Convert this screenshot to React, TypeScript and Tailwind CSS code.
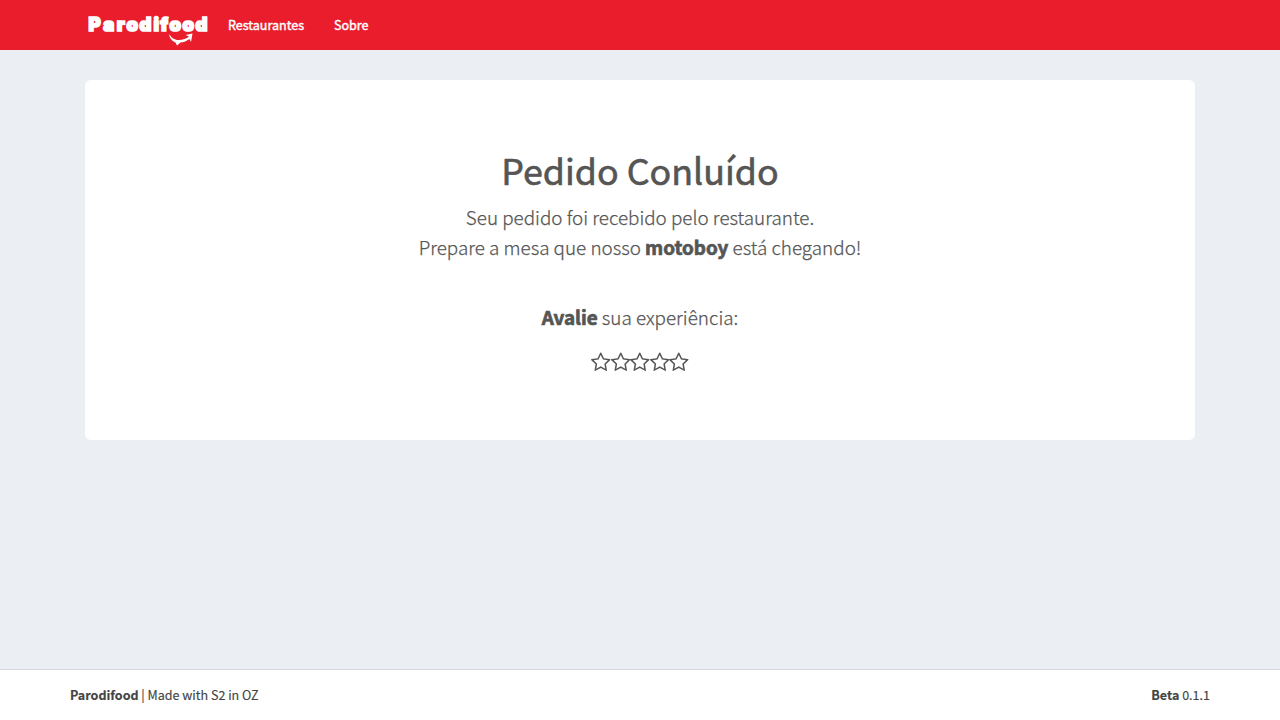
const STARS = [1, 2, 3, 4, 5];

function Logo() {
  return (
    <svg width="126" height="36" viewBox="-2 -2 126 36" className="block shrink-0 overflow-visible text-white" fill="currentColor" role="img" aria-label="Parodifood">
      <text
        x="1.4 16.2 29.8 39.4 52.6 66.4 73.2 82.4 95.4 108.4"
        y="18"
        stroke="currentColor"
        strokeWidth="1.7"
        className="font-['Inter',sans-serif] text-[18.5px] font-black"
      >
        Parodifood
      </text>
      <path d="M82 21C84 24.5 87 26.500 90 27C95 27.500 99 26 102 23.500L98.500 22L105.500 20.500L104 29L102.500 26C99 28.500 96 29.500 93.500 29.500L90 32.500L88.500 29.500C85.500 28.500 82.500 25 82 21Z" />
    </svg>
  );
}

function Star() {
  return (
    <svg width="19.5" height="21" viewBox="64 0 1664 1792" fill="currentColor" className="block shrink-0">
      <path d="M1201 1004l306-297-422-62-189-382-189 382-422 62 306 297-73 421 378-199 377 199zm527-357q0 22-26 48l-363 354 86 500q1 7 1 20 0 50-41 50-19 0-40-12l-449-236-449 236q-22 12-40 12-21 0-31.5-14.5t-10.5-35.5q0-6 2-20l86-500-364-354q-25-27-25-48 0-37 56-46l502-73 225-455q19-41 49-41t49 41l225 455 502 73q56 9 56 46z" />
    </svg>
  );
}

export default function App() {
  return (
    <div className="flex h-screen flex-col bg-[#ebeff4] font-['Noto_Sans_CJK_SC',sans-serif] text-[12.54px] text-[#444]">
      <header className="flex h-[50px] shrink-0 bg-[#ea1d2c] pl-[85px] text-white">
        <div className="pt-[11px]">
          <Logo />
        </div>
        <nav className="ml-[17px] flex gap-[30px] leading-[50px] [-webkit-text-stroke:0.4px_white]">
          <a>Restaurantes</a>
          <a>Sobre</a>
        </nav>
      </header>
      <main className="flex-1 px-[85px] pt-[30px]">
        <section className="flex h-[360px] flex-col items-center rounded-md bg-white pt-[67px] text-[18.84px] leading-[30px] font-light text-[#555]">
          <h1 className="text-[35.8px] leading-[44px] font-normal [-webkit-text-stroke:0.6px_#555]">Pedido Conluído</h1>
          <p className="mt-[11px] [-webkit-text-stroke:0.25px_#555]">Seu pedido foi recebido pelo restaurante.</p>
          <p className="[-webkit-text-stroke:0.25px_#555]">
            Prepare a mesa que nosso <b className="font-bold [-webkit-text-stroke:0.7px_#555]">motoboy</b> está chegando!
          </p>
          <p className="mt-[40px] [-webkit-text-stroke:0.25px_#555]">
            <b className="font-bold [-webkit-text-stroke:0.7px_#555]">Avalie</b> sua experiência:
          </p>
          <div className="mt-[20px] flex">
            {STARS.map((n) => (
              <Star key={n} />
            ))}
          </div>
        </section>
      </main>
      <footer className="flex h-[51px] shrink-0 justify-between border-t border-[#d2d6de] bg-white px-[70px] leading-[50px] [-webkit-text-stroke:0.15px_#444]">
        <span>
          <b>Parodifood</b> | Made with S2 in OZ
        </span>
        <span>
          <b>Beta</b> 0.1.1
        </span>
      </footer>
    </div>
  );
}
